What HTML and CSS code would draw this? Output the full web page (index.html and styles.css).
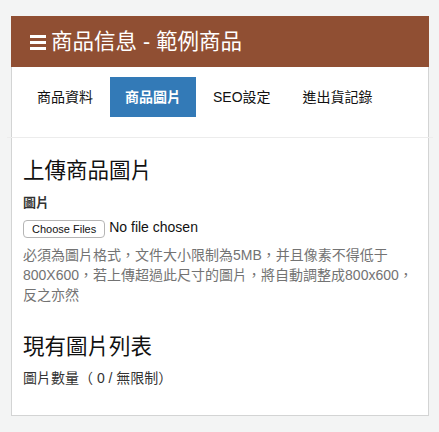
FILE: index.html
```html
<!DOCTYPE html>
<html lang="zh-Hant">
<head>
    <meta charset="UTF-8">
    <meta name="viewport" content="width=device-width, initial-scale=1.0">
    <title>商品信息 - 範例商品</title>
    <link rel="stylesheet" href="styles.css">
</head>
<body>
    <div class="panel">
        <div class="panel-heading">
            <span class="burger"><i></i><i></i><i></i></span>
            <span>商品信息 - 範例商品</span>
        </div>

        <div class="tabs">
            <a class="tab">商品資料</a>
            <a class="tab active">商品圖片</a>
            <a class="tab">SEO設定</a>
            <a class="tab">進出貨記錄</a>
        </div>
        <div class="divider"></div>

        <div class="panel-body">
            <h3>上傳商品圖片</h3>
            <label class="field-label">圖片</label>
            <div class="file-row">
                <button class="file-btn" type="button">Choose Files</button>
                <span class="file-name">No file chosen</span>
            </div>
            <p class="help">必須為圖片格式，文件大小限制為5MB，并且像素不得低于800X600，若上傳超過此尺寸的圖片，將自動調整成800x600，反之亦然</p>

            <h3 class="list-title">現有圖片列表</h3>
            <p class="count">圖片數量（ 0 / 無限制）</p>
        </div>
    </div>
</body>
</html>
```

FILE: styles.css
```css
body {
    font-family: "Liberation Sans", "Noto Sans CJK TC", sans-serif;
    margin: 0;
    padding: 16px 10px 16px 11px;
    background: #f3f4f4;
    color: #333;
}
.panel {
    background: white;
    border: 1px solid #d3d4d4;
    height: 400px;
    box-sizing: border-box;
}
.panel-heading {
    margin: -1px -1px 0;
    height: 51px;
    background: #904f33;
    color: white;
    display: flex;
    align-items: center;
    padding: 0 19px;
    font-size: 21.5px;
    line-height: 24px;
}
.burger {
    display: flex;
    flex-direction: column;
    gap: 3px;
    width: 16px;
    margin-right: 5px;
    margin-top: 1px;
}
.burger i {
    display: block;
    height: 3px;
    background: white;
}
.tabs {
    display: flex;
    gap: 2px;
    padding: 10px 10px 20px;
}
.tab {
    padding: 10px 15px;
    font-size: 14px;
    line-height: 20px;
    color: #111;
}
.tab.active {
    background: #337ab7;
    color: white;
    font-weight: bold;
}
.divider {
    height: 1px;
    background: #ececec;
    margin: 0 -5px;
}
.panel-body {
    padding: 20px 11px 0;
}
h3 {
    font-size: 21.5px;
    font-weight: normal;
    line-height: 26px;
    margin: 0 0 10px;
    color: #111;
}
.field-label {
    display: block;
    font-size: 13px;
    font-weight: bold;
    line-height: 18px;
    margin-bottom: 4px;
}
.file-row {
    display: flex;
    align-items: center;
    gap: 4px;
}
.file-btn {
    font-family: inherit;
    font-size: 11px;
    height: 18px;
    padding: 0 8px;
    background: white;
    border: 1px solid #b5b5b5;
    border-radius: 4px;
    color: #111;
    margin-top: 4px;
}
.file-name {
    font-size: 14px;
    line-height: 18px;
    color: #111;
}
.help {
    margin: 7px 0 0;
    font-size: 14px;
    line-height: 20px;
    color: #737373;
}
.list-title {
    margin-top: 29px;
    margin-bottom: 9px;
}
.count {
    margin: 0;
    font-size: 14px;
    line-height: 18px;
    color: #333;
}
```
